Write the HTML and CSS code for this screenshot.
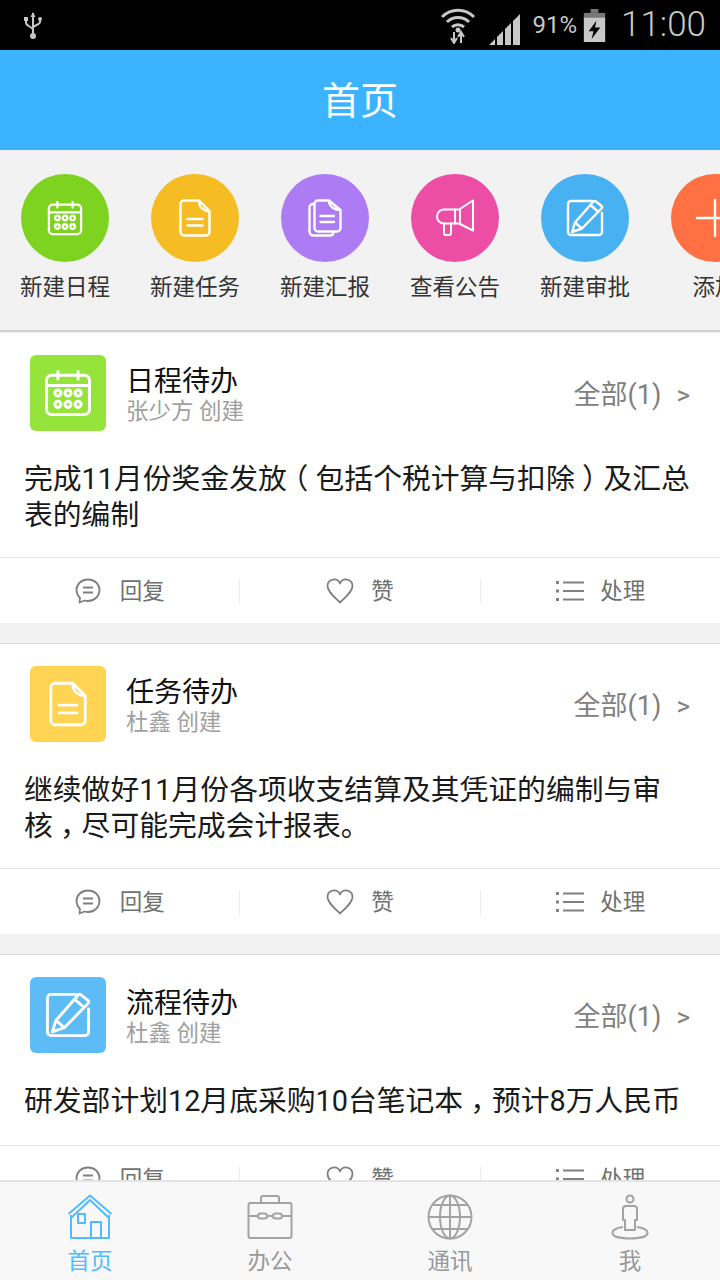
FILE: index.html
```html
<!doctype html>
<html lang="zh-CN">
  <head>
    <meta charset="UTF-8" />
    <meta name="viewport" content="width=device-width, initial-scale=1.0" />
    <title>首页</title>
    <link rel="stylesheet" href="styles.css">
  </head>
  <body>
    <svg class="sprites" width="0" height="0">
      <symbol id="i-cal" viewBox="0 0 38 38">
        <rect x="2" y="5" width="34" height="31" rx="4" />
        <path d="M2 13H36M11 2V8M27 2V8" />
        <circle cx="11" cy="19" r="2.4" /><circle cx="19" cy="19" r="2.4" /><circle cx="27" cy="19" r="2.4" />
        <circle cx="11" cy="28" r="2.4" /><circle cx="19" cy="28" r="2.4" /><circle cx="27" cy="28" r="2.4" />
      </symbol>
      <symbol id="i-doc" viewBox="0 0 32 38">
        <path d="M20 1.5H5A3.500 3.500 0 0 0 1.500 5V33A3.500 3.500 0 0 0 5 36.500H27A3.500 3.500 0 0 0 30.500 33V12C25 12 20 9 20 1.500L30.500 12" />
        <path d="M8.500 20H23.500M8.500 26.500H23.500" />
      </symbol>
      <symbol id="i-docs" viewBox="0 0 34 38">
        <path d="M6 5H5A3.500 3.500 0 0 0 1.500 8.500V32.500A4 4 0 0 0 5.500 36.500H22A3.500 3.500 0 0 0 25.500 33.500" />
        <path d="M21 1.500H10A3.500 3.500 0 0 0 6.500 5V29A3.500 3.500 0 0 0 10 32.500H29A3.500 3.500 0 0 0 32.500 29V11C27 11 21 8 21 1.500L32.500 11" />
        <path d="M12.500 17H26M12.500 23H26" />
      </symbol>
      <symbol id="i-horn" viewBox="0 0 40 38">
        <path d="M38 1.500 24 10.500H9A7 7 0 0 0 9 24.500H24L38 31.500Z" />
        <path d="M20 10.500V24.500M25 10.500V24.500M9 24.500V34A2 2 0 0 0 11 36H14A2 2 0 0 0 16 34V24.500" />
      </symbol>
      <symbol id="i-edit" viewBox="0 0 38 38">
        <path d="M26 2H5A3 3 0 0 0 2 5V33A3 3 0 0 0 5 36H33A3 3 0 0 0 36 33V14" />
        <path d="M30 2.500 35.500 7A1.800 1.800 0 0 1 35.500 9.500L16 29.500 6 33 9 23.500 27.500 2.500A1.800 1.800 0 0 1 30 2.500ZM25.500 7 32 12.500M9 23.500 16 29.500" />
      </symbol>
      <symbol id="i-plus" viewBox="0 0 40 40">
        <path d="M20 2V38M2 20H38" />
      </symbol>
      <symbol id="i-reply" viewBox="0 0 26 26">
        <path d="M13 1.500C6.500 1.500 1.500 6 1.500 12C1.500 15.500 3 18 5 20L4.500 24.500 9.500 22.500C10.500 22.800 11.800 23 13 23C19.500 23 24.500 18 24.500 12C24.500 6 19.500 1.500 13 1.500Z" />
        <path d="M8 9.500H18M8 14.500H18" />
      </symbol>
      <symbol id="i-heart" viewBox="0 0 28 26">
        <path d="M14 24.500C8 18.500 1.500 13.500 1.500 8A6.500 6.500 0 0 1 14 5.500A6.500 6.500 0 0 1 26.500 8C26.500 13.500 20 18.500 14 24.500Z" />
      </symbol>
      <symbol id="i-list" viewBox="0 0 30 22">
        <path d="M8 2.500H29M8 11H29M8 19.500H29" />
        <path class="dots" d="M1 2.500H4M1 11H4M1 19.500H4" />
      </symbol>
    </svg>

    <div class="status-bar">
      <svg class="usb" width="18" height="28" viewBox="0 0 18 28">
        <path d="M9 2V26M2 8V12C2 15 9 16 9 19M16 8V11C16 14 9 14 9 17" />
        <circle cx="9" cy="25" r="2" /><path class="solid" d="M9 1 11.500 6H6.500Z" /><rect class="solid" x="0" y="6" width="4" height="4" /><circle class="solid" cx="16" cy="8" r="2" />
      </svg>
      <div class="status-right">
        <svg class="wifi" width="36" height="38" viewBox="0 0 36 38">
          <path d="M2 11C11 2 25 2 34 11M7 16C13 10 23 10 29 16M12 21C15.500 18 20.500 18 24 21" />
          <circle class="solid" cx="18" cy="24" r="2.500" />
          <path class="thin" d="M14 26V36M11 32 14 37 17 32M21 37V27M18 31 21 26 24 31" />
        </svg>
        <svg class="signal" width="32" height="32" viewBox="0 0 32 32">
          <path class="solid" d="M0 32 6 26V32ZM8 32V24L14 18V32ZM16 32V16L22 10V32ZM24 32V8L31 1V32Z" />
        </svg>
        <span class="battery-pct">91%</span>
        <svg class="battery" width="23" height="33" viewBox="0 0 22 34">
          <rect class="solid dim" x="7" y="0" width="8" height="4" />
          <rect class="solid dim" x="0" y="4" width="22" height="7" />
          <path class="solid" d="M0 9H22V34H0ZM13 12 5 23H10L8 31 17 19H11.500Z" fill-rule="evenodd" />
        </svg>
        <span class="clock">11:00</span>
      </div>
    </div>

    <div class="title-bar">首页</div>

    <div class="main">
      <div class="shortcuts">
        <div class="shortcut">
          <div class="circle green"><svg class="line-icon" width="36" height="36"><use href="#i-cal" /></svg></div>
          <span>新建日程</span>
        </div>
        <div class="shortcut">
          <div class="circle yellow"><svg class="line-icon" width="32" height="38"><use href="#i-doc" /></svg></div>
          <span>新建任务</span>
        </div>
        <div class="shortcut">
          <div class="circle purple"><svg class="line-icon" width="34" height="38"><use href="#i-docs" /></svg></div>
          <span>新建汇报</span>
        </div>
        <div class="shortcut">
          <div class="circle pink"><svg class="line-icon thin-line" width="40" height="38"><use href="#i-horn" /></svg></div>
          <span>查看公告</span>
        </div>
        <div class="shortcut">
          <div class="circle blue"><svg class="line-icon" width="38" height="38"><use href="#i-edit" /></svg></div>
          <span>新建审批</span>
        </div>
        <div class="shortcut">
          <div class="circle orange"><svg class="line-icon" width="40" height="40"><use href="#i-plus" /></svg></div>
          <span>添加</span>
        </div>
      </div>

      <div class="card">
        <div class="card-head">
          <div class="square lime"><svg class="line-icon" width="48" height="48"><use href="#i-cal" /></svg></div>
          <div class="card-title">
            <h3>日程待办</h3>
            <p>张少方 创建</p>
          </div>
          <div class="card-all">全部(1)<i>&gt;</i></div>
        </div>
        <p class="card-text">完成11月份奖金发放<span class="fw">（</span>包括个税计算与扣除<span class="fw">）</span>及汇总表的编制</p>
        <div class="actions">
          <div class="action"><svg class="act-icon reply" width="26" height="26"><use href="#i-reply" /></svg>回复</div>
          <div class="action"><svg class="act-icon" width="28" height="26"><use href="#i-heart" /></svg>赞</div>
          <div class="action"><svg class="act-icon list" width="30" height="22"><use href="#i-list" /></svg>处理</div>
        </div>
      </div>

      <div class="card">
        <div class="card-head">
          <div class="square amber"><svg class="line-icon" width="38" height="46"><use href="#i-doc" /></svg></div>
          <div class="card-title">
            <h3>任务待办</h3>
            <p>杜鑫 创建</p>
          </div>
          <div class="card-all">全部(1)<i>&gt;</i></div>
        </div>
        <p class="card-text">继续做好11月份各项收支结算及其凭证的编制与审核<span class="fw">，</span>尽可能完成会计报表。</p>
        <div class="actions">
          <div class="action"><svg class="act-icon reply" width="26" height="26"><use href="#i-reply" /></svg>回复</div>
          <div class="action"><svg class="act-icon" width="28" height="26"><use href="#i-heart" /></svg>赞</div>
          <div class="action"><svg class="act-icon list" width="30" height="22"><use href="#i-list" /></svg>处理</div>
        </div>
      </div>

      <div class="card">
        <div class="card-head">
          <div class="square sky"><svg class="line-icon" width="46" height="46"><use href="#i-edit" /></svg></div>
          <div class="card-title">
            <h3>流程待办</h3>
            <p>杜鑫 创建</p>
          </div>
          <div class="card-all">全部(1)<i>&gt;</i></div>
        </div>
        <p class="card-text single">研发部计划12月底采购10台笔记本<span class="fw">，</span>预计8万人民币</p>
        <div class="actions">
          <div class="action"><svg class="act-icon reply" width="26" height="26"><use href="#i-reply" /></svg>回复</div>
          <div class="action"><svg class="act-icon" width="28" height="26"><use href="#i-heart" /></svg>赞</div>
          <div class="action"><svg class="act-icon list" width="30" height="22"><use href="#i-list" /></svg>处理</div>
        </div>
      </div>
    </div>

    <div class="tab-bar">
      <div class="tab active">
        <svg class="tab-icon" width="46" height="46" viewBox="0 0 46 46">
          <path d="M1.500 20 23 1.500 44.500 20M4 24 23 6 42 24" />
          <path d="M4 21V44H42V21" />
          <rect x="11" y="20" width="7" height="9" />
          <path d="M24 44V28H34V44" />
        </svg>
        <span>首页</span>
      </div>
      <div class="tab">
        <svg class="tab-icon" width="46" height="46" viewBox="0 0 46 46">
          <rect x="1.500" y="9" width="43" height="35" rx="2" />
          <path d="M14 9V4A2 2 0 0 1 16 2H30A2 2 0 0 1 32 4V9M1.500 22H11M20 22H26M35 22H44.500" />
          <rect x="11" y="19.500" width="9" height="5" rx="2.500" />
          <rect x="26" y="19.500" width="9" height="5" rx="2.500" />
        </svg>
        <span>办公</span>
      </div>
      <div class="tab">
        <svg class="tab-icon" width="46" height="46" viewBox="0 0 46 46">
          <circle cx="23" cy="23" r="21.500" />
          <ellipse cx="23" cy="23" rx="10" ry="21.500" />
          <path d="M23 1.500V44.500M1.500 23H44.500M5 11H41M5 35H41" />
        </svg>
        <span>通讯</span>
      </div>
      <div class="tab">
        <svg class="tab-icon" width="38" height="46" viewBox="0 0 38 46">
          <circle cx="19" cy="5" r="3.500" />
          <path d="M15 12H23A3 3 0 0 1 26 15V26H24V36H14V26H12V15A3 3 0 0 1 15 12Z" />
          <path d="M12 33C5 34 1.500 36.500 1.500 39C1.500 42.500 9 44.500 19 44.500C29 44.500 36.500 42.500 36.500 39C36.500 36.500 33 34 26 33" />
        </svg>
        <span>我</span>
      </div>
    </div>
  </body>
</html>
```

FILE: styles.css
```css
html,
body {
  margin: 0;
  padding: 0;
}
body {
  width: 720px;
  height: 1280px;
  overflow: hidden;
  display: flex;
  flex-direction: column;
  font-family: Roboto, "Noto Sans CJK SC", sans-serif;
  background-color: #f2f2f2;
  color: #111;
}
.sprites {
  position: absolute;
}
p,
h3 {
  margin: 0;
  font-weight: normal;
}

/* status bar */
.status-bar {
  height: 50px;
  flex: none;
  background-color: #000;
  display: flex;
  align-items: center;
  justify-content: space-between;
  padding: 0 14px 0 24px;
  color: #c8c8c8;
}
.status-bar svg {
  fill: none;
  stroke: #c8c8c8;
  stroke-width: 3;
  flex: none;
}
.status-bar .solid {
  fill: #c8c8c8;
  stroke: none;
}
.status-bar .dim {
  fill: #777;
}
.status-bar .thin {
  stroke-width: 2;
}
.status-bar .usb {
  stroke-width: 2;
}
.status-right {
  display: flex;
  align-items: center;
}
.wifi {
  margin-right: 13px;
}
.signal {
  margin: 8px 11px 0 0;
}
.battery-pct {
  font-size: 24px;
  margin-right: 6px;
}
.battery {
  margin-right: 15px;
}
.clock {
  font-size: 35px;
  font-weight: 300;
  line-height: 50px;
}

/* title */
.title-bar {
  height: 100px;
  flex: none;
  box-sizing: border-box;
  padding-top: 3px;
  background-color: #3bb3ff;
  color: #fff;
  font-size: 38px;
  line-height: 97px;
  text-align: center;
}

.main {
  flex: 1;
  min-height: 0;
  overflow: hidden;
}

/* round shortcuts */
.shortcuts {
  height: 182px;
  box-sizing: border-box;
  padding-top: 24px;
  display: flex;
  overflow: hidden;
  border-bottom: 2px solid #d2d2d2;
}
.shortcut {
  flex: 0 0 130px;
  display: flex;
  flex-direction: column;
  align-items: center;
  font-size: 22.5px;
  line-height: 32px;
  color: #333;
}
.shortcut span {
  margin-top: 9px;
}
.circle {
  width: 88px;
  height: 88px;
  border-radius: 50%;
  display: flex;
  align-items: center;
  justify-content: center;
}
.line-icon {
  fill: none;
  stroke: #fff;
  stroke-width: 2.4;
  stroke-linejoin: round;
  stroke-linecap: round;
}
.thin-line {
  stroke-width: 2;
}
.green { background-color: #7ed321; }
.yellow { background-color: #f5bd23; }
.purple { background-color: #ad7cf5; }
.pink { background-color: #ec4ea6; }
.blue { background-color: #47b1f2; }
.orange { background-color: #ff7043; }

/* cards */
.card {
  background-color: #fff;
  border-top: 1px solid #d9d9d9;
  margin-bottom: 20px;
}
.shortcuts + .card {
  border-top-color: #f0f0f0;
}
.card-head {
  display: flex;
  align-items: center;
  padding: 22px 30px 0;
}
.square {
  width: 76px;
  height: 76px;
  border-radius: 6px;
  display: flex;
  align-items: center;
  justify-content: center;
  flex: none;
}
.lime { background-color: #94e43c; }
.amber { background-color: #ffd452; }
.sky { background-color: #5dbbf6; }
.card-title {
  flex: 1;
  margin-left: 20px;
  padding-top: 4px;
}
.card-title h3 {
  font-size: 28px;
  line-height: 34px;
  margin-bottom: -2px;
  color: #111;
}
.card-title p {
  font-size: 22.5px;
  line-height: 28px;
  color: #a0a0a0;
}
.card-all {
  font-size: 27px;
  color: #808080;
  margin-bottom: 1px;
}
.card-all i {
  font-style: normal;
  font-size: 26px;
  margin-left: 15px;
}
.card-text {
  font-size: 28.8px;
  line-height: 36px;
  color: #1a1a1a;
  padding: 30px 24px 24px;
}
.card-text.single {
  padding-bottom: 26px;
}
/* centre the full-width punctuation in its em box */
.fw {
  padding: 0 0.25em;
  font-feature-settings: "halt";
}
.actions {
  height: 65px;
  border-top: 1px solid #e6e6e6;
  display: flex;
  align-items: center;
}
.action {
  flex: 1;
  height: 24px;
  display: flex;
  align-items: center;
  justify-content: center;
  gap: 17px;
  font-size: 22.5px;
  line-height: 22px;
  color: #707070;
  border-left: 1px solid #ececec;
}
.action:first-child {
  border-left: none;
}
.act-icon {
  fill: none;
  stroke: #808080;
  stroke-width: 1.8;
  stroke-linejoin: round;
}
.act-icon.reply {
  margin-right: 2px;
}
.act-icon.list {
  margin-right: -2px;
}
.dots {
  stroke-width: 3;
}

/* bottom tabs */
.tab-bar {
  height: 100px;
  flex: none;
  box-sizing: border-box;
  background-color: #f8f8f8;
  border-top: 2px solid #e4e4e4;
  display: flex;
}
.tab {
  flex: 1;
  display: flex;
  flex-direction: column;
  align-items: center;
  padding-top: 12px;
  font-size: 22.5px;
  line-height: 30px;
  color: #999;
}
.tab span {
  margin-top: 6px;
}
.tab-icon {
  fill: none;
  stroke: #a3a3a3;
  stroke-width: 2;
  stroke-linejoin: round;
}
.tab.active {
  color: #4fbcff;
}
.tab.active .tab-icon {
  stroke: #4fbcff;
}
```
